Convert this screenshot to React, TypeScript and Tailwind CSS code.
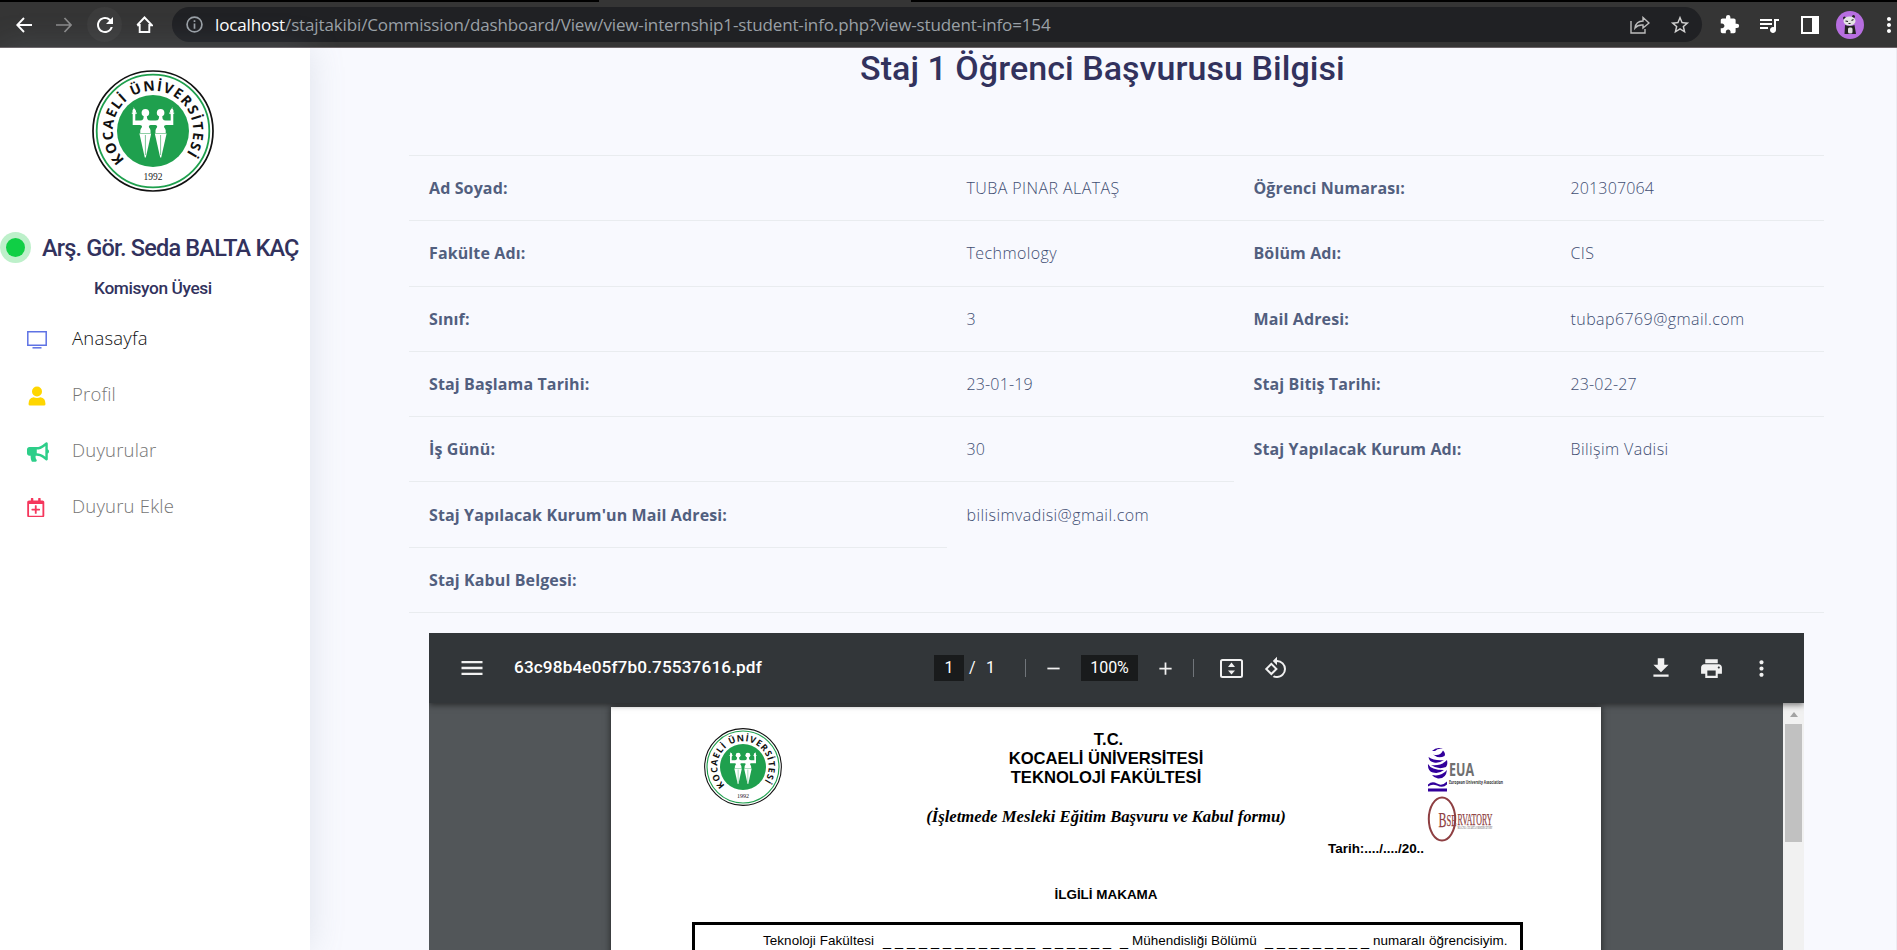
import {
  MdAdd, MdExtension, MdFileDownload, MdMenu, MdMoreVert, MdPrint, MdQueueMusic,
  MdRefresh, MdRemove, MdRotate90DegreesCcw, MdStarBorder,
} from 'react-icons/md';
import { FaBullhorn, FaRegCalendarPlus } from 'react-icons/fa';

function UniversityLogo({ id, className }: { id: string; className: string }) {
  return (
    <svg viewBox="-61 -61 122 122" className={className}>
      <circle r="60" fill="#fff" stroke="#111" strokeWidth="1.7" />
      <circle r="56.3" fill="none" stroke="#1fa04e" strokeWidth="1.8" />
      <circle r="36" fill="#1fa04e" />
      <path id={id} d="M-28.300 28.700A40.300 40.300 0 1 1 28.300 28.700" fill="none" />
      <text fontFamily="Open Sans, sans-serif" fontWeight="700" fontSize="14" fill="#111">
        <textPath href={`#${id}`} textLength="182" lengthAdjust="spacing">KOCAELİ ÜNİVERSİTESİ</textPath>
      </text>
      <text y="49" textAnchor="middle" fontFamily="Liberation Serif, serif" fontSize="9.5" fill="#222">1992</text>
      <g fill="#fff">
        {[1, -1].map((s) => (
          <g key={s} transform={`scale(${s} 1)`}>
            <circle cx="7.6" cy="-18.300" r="3.800" />
            <path d="M6.300-15.500h2.800l.600 3.500q1 1.500 3 1.500h5v-7.500h2.600v12h-7.300q-2 0-2 1.500.200 1.200 1.200 2.200.800 1.200.500 4.300H2.500q-.300-3 .500-4.300 1-1 1.200-2.200Q4-6 2.500-6H0v-4.500h2.500q2.500 0 3.200-1.500z" />
            <path d="M1.800 2.500h11.800L8.200 26.500H7.200z" />
            <path d="M18.800-23.500q2.800 3.500 1.200 5h1.200v1.200h-1.500l-.5 2h-1l-.5-2h-1.500v-1.200h1.200q-1.700-1.700 2.400-5z" />
          </g>
        ))}
      </g>
      <path d="M-7.600 4v20M7.600 4v20" stroke="#1fa04e" strokeWidth=".6" />
    </svg>
  );
}

function Bar() {
  return (
    <header className="flex h-12 shrink-0 flex-col bg-[#353535]">
      <div className="flex h-0.5 bg-black">
        <div className="ml-[599px] w-[312px] bg-[#353535]" />
      </div>
      <div className="flex h-[45px] items-center">
        <svg viewBox="0 0 16 16" className="ml-4 size-4 shrink-0 fill-none stroke-white stroke-[1.9]"><path d="M16 8H1.500M8 1 1.300 8 8 15" /></svg>
        <svg viewBox="0 0 16 16" className="ml-6 size-4 shrink-0 fill-none stroke-[#8a8a8a] stroke-[1.700]"><path d="M0 8h15M8.500 1 15 8 8.500 15" /></svg>
        <span className="ml-[15px] flex size-[35px] shrink-0 items-center justify-center rounded-full bg-[#3c3c3c]">
          <MdRefresh className="size-6 text-white" />
        </span>
        <svg viewBox="0 0 16 17" className="ml-[14px] size-[17px] shrink-0 fill-none stroke-white stroke-[1.900]"><path d="M3.200 8v8h9.600V8M.700 9.200 8 1.500l7.300 7.700H13M3 9.200H.700" /></svg>
        <div className="ml-[19px] flex h-[35px] w-[1530px] shrink-0 items-center rounded-full bg-[#202124]">
          <svg viewBox="0 0 16 16" className="ml-3.5 size-[17px] fill-none stroke-[#9aa0a6] stroke-[1.600]"><circle cx="8" cy="8" r="7" /><path d="M8 7v5M8 4v1.700" /></svg>
          <p className="ml-3 w-[1180px] whitespace-nowrap font-['Open_Sans'] text-[17px] leading-6 tracking-[-0.130px] text-[#9aa0a6]">
            <span className="text-white">localhost</span>/stajtakibi/Commission/dashboard/View/view-internship1-student-info.php?view-student-info=154
          </p>
          <svg viewBox="0 0 20 18" className="ml-auto h-[18px] w-5 fill-none stroke-[#bdbdbd] stroke-[1.400]"><path d="M1 5v12h14v-4M5 12q1-7 8-7V1.500L19 7l-6 5V9q-5-.500-8 3z" /></svg>
          <MdStarBorder className="ml-[19px] mr-[11px] size-[22px] text-[#d0d0d0]" />
        </div>
        <MdExtension className="ml-[17px] size-[21px] shrink-0 text-white" />
        <MdQueueMusic className="ml-[17px] size-6 shrink-0 text-white" />
        <span className="ml-[20px] h-[18px] w-[18px] shrink-0 border-2 border-r-[7px] border-white" />
        <svg viewBox="-14 -14 28 28" className="ml-[17px] size-7 shrink-0">
          <circle r="14" fill="#b76ee0" />
          <circle cx="-5.500" cy="-7" r="1.500" fill="#222" /><circle cx="3.500" cy="-8.500" r="1.500" fill="#222" />
          <ellipse cx="-.5" cy="-4" rx="6" ry="4.500" fill="#e4e4e4" />
          <path d="M-4.500-4l2.500.5M3.500-5.500l-2 1M-1.500-1.500h2" stroke="#222" strokeWidth="1.100" />
          <path d="M-5 0q5 2 9.500 0l1.500 9h-11.500z" fill="#222" />
          <rect x="-2" y="2.500" width="4.500" height="6" rx="1.500" fill="#ddd" />
        </svg>
        <MdMoreVert className="ml-[13px] size-6 shrink-0 text-white" />
      </div>
      <div className="h-px bg-[#6b6467]" />
    </header>
  );
}

const menu = [
  { label: 'Anasayfa', tone: 'text-[#111]', icon: <svg viewBox="0 0 20 18" className="h-[18px] w-5 fill-none stroke-[#5e72e4]"><path strokeWidth="1.500" d="M.800.800h18.400v13.400H.800z" /><path strokeWidth="1.500" d="M5.500 16.800h9" /></svg> },
  { label: 'Profil', tone: 'text-[#757575]', icon: <svg viewBox="0 0 18 20" className="ml-[1.500px] h-5 w-[18px] fill-[#ffd600]"><circle cx="9" cy="5.500" r="5" /><path d="M.500 18q0-6 5-6.800 3.500 1.500 7 0 5 .800 5 6.800 0 1.500-1.500 1.500H2Q.500 19.500.500 18z" /></svg> },
  { label: 'Duyurular', tone: 'text-[#757575]', icon: <FaBullhorn className="-mt-px ml-[0.500px] h-5 w-[22px] text-[#2dce89]" /> },
  { label: 'Duyuru Ekle', tone: 'text-[#757575]', icon: <FaRegCalendarPlus className="-mt-px -ml-px size-[19.500px] text-[#f5365c]" /> },
];

function Sidebar() {
  return (
    <aside className="z-10 flex w-[310px] shrink-0 flex-col bg-white pt-[22px] shadow-[0_0_32px_rgba(136,152,170,0.22)]">
      <UniversityLogo id="side-ring" className="ml-[92px] size-[122px]" />
      <div className="mt-[36px] flex h-[38px] items-center">
        <span className="flex size-[31px] shrink-0 items-center justify-center rounded-full bg-[#bdf0ca]">
          <span className="size-[19px] rounded-full bg-[#10cf45]" />
        </span>
        <h2 className="ml-[11px] mt-1 whitespace-nowrap font-['Roboto'] text-[23.500px] font-medium tracking-[-0.800px] text-[#32325d]">Arş. Gör. Seda BALTA KAÇ</h2>
      </div>
      <p className="mt-[8px] h-[27px] w-[306px] text-center font-['Roboto'] text-[17.300px] font-medium leading-7 tracking-[-0.380px] text-[#32325d]">Komisyon Üyesi</p>
      <nav className="mt-[9px] flex flex-col">
        {menu.map((m) => (
          <a key={m.label} className="flex h-14 items-center">
            <span className="ml-[26.500px] mt-1 flex w-[45.500px] shrink-0">{m.icon}</span>
            <span className={`font-['Open_Sans'] text-[18.500px] font-light tracking-[0.200px] ${m.tone}`}>{m.label}</span>
          </a>
        ))}
      </nav>
    </aside>
  );
}

const rows = [
  ['Ad Soyad:', 'TUBA PINAR ALATAŞ', 'Öğrenci Numarası:', '201307064'],
  ['Fakülte Adı:', 'Techmology', 'Bölüm Adı:', 'CIS'],
  ['Sınıf:', '3', 'Mail Adresi:', 'tubap6769@gmail.com'],
  ['Staj Başlama Tarihi:', '23-01-19', 'Staj Bitiş Tarihi:', '23-02-27'],
  ['İş Günü:', '30', 'Staj Yapılacak Kurum Adı:', 'Bilişim Vadisi'],
  ["Staj Yapılacak Kurum'un Mail Adresi:", 'bilisimvadisi@gmail.com'],
  ['Staj Kabul Belgesi:'],
];

function cellTone(cell: string, index: number) {
  if (index % 2 === 0) return 'font-bold tracking-[0.120px] text-[#525f7f]';
  if (/^[\d-]+$/.test(cell)) return 'font-light tracking-[0.150px] text-[#414e72]';
  return 'font-light tracking-[0.420px] text-[#414e72]';
}

function InfoTable() {
  return (
    <div className="flex w-[1415px] shrink-0 flex-col border-b border-[#e9ecef] font-['Open_Sans'] text-[16px]">
      {rows.map((cells) => (
        <div key={cells[0]} className="grid h-[65.300px] grid-cols-[537.500px_287px_317px_273.500px]">
          {cells.map((cell, i) => (
            <div key={i} className={`flex items-center border-t border-[#e9ecef] pl-5 ${cellTone(cell, i)}`}>
              {cell}
            </div>
          ))}
        </div>
      ))}
    </div>
  );
}

function EuaMark() {
  return (
    <svg viewBox="0 0 90 100" className="absolute left-[816px] top-[39px] h-[100px] w-[90px]">
      <g fill="#32009b">
        <path d="M5 5q5-5 11-2-5-1-8 2zM6 8.500q7 2 10-4 3 3 1.500 5.500-6 3-11.500-1.500zM1.500 11q6 4 15.500 3-5 3.500-10 2.500-5-1-5.500-5.500z" />
        <path d="M4 19q10 1.500 16-5 1 5-1 7-8 3-15-2zM1 18q3 6 16 6-5 4-11 2.500Q.500 25 1 18zM5 29q9 2 15-5-1 9-9 8.500-4-.500-6-3.500zM1 42.500h19v3H1zM1 38.500q4-4 9-1 5 3 10-2v3q-4 4-10 1-5-2-9 1z" />
      </g>
      <text x="22" y="30" textLength="25" lengthAdjust="spacingAndGlyphs" fontFamily="Open Sans, sans-serif" fontWeight="700" fontSize="17" fill="#707070">EUA</text>
      <text x="22" y="37.500" textLength="54" lengthAdjust="spacingAndGlyphs" fontFamily="Open Sans, sans-serif" fontWeight="700" fontSize="5.500" fill="#333">European University Association</text>
      <ellipse cx="15" cy="73" rx="13.200" ry="21.500" fill="none" stroke="#8e3f42" strokeWidth="2" />
      <g fontFamily="Liberation Serif, serif" fill="#8e3f42" stroke="#8e3f42" strokeWidth=".25">
        <text x="11.500" y="80.500" textLength="8" lengthAdjust="spacingAndGlyphs" fontSize="22">B</text>
        <text x="19.500" y="79.500" textLength="10" lengthAdjust="spacingAndGlyphs" fontSize="17">SE</text>
        <text x="30.500" y="79" textLength="35" lengthAdjust="spacingAndGlyphs" fontSize="16">RVATORY</text>
        <text x="30.500" y="83" textLength="35" lengthAdjust="spacingAndGlyphs" fontSize="4" fill="#555" stroke="none">MAGNA CHARTA OBSERVATORY</text>
      </g>
    </svg>
  );
}

function PdfViewer() {
  return (
    <div className="ml-5 mt-5 flex h-[400px] w-[1375px] shrink-0 flex-col overflow-hidden">
      <div className="relative z-10 flex h-[70px] shrink-0 items-center bg-[#323639] font-['Roboto'] text-[16px] text-white shadow-[0_2px_6px_rgba(0,0,0,0.500)]">
        <MdMenu className="ml-[28.500px] h-[28px] w-[28px] text-[#f1f1f1]" />
        <span className="ml-[28.500px] w-[420px] whitespace-nowrap text-[17.200px] font-medium tracking-[0.120px]">63c98b4e05f7b0.75537616.pdf</span>
        <span className="flex h-[26px] w-[30px] items-center justify-center bg-[#191b1c]">1</span>
        <span className="ml-[5px] w-[17px]">/</span>
        <span className="w-[39px]">1</span>
        <span className="h-[18px] w-px bg-[#70757a]" />
        <MdRemove className="ml-[17px] size-[21px] text-[#f1f1f1]" />
        <span className="ml-[17px] flex h-[26px] w-[57px] items-center justify-center bg-[#191b1c]">100%</span>
        <MdAdd className="ml-[17px] size-[21px] text-[#f1f1f1]" />
        <span className="ml-[17px] h-[18px] w-px bg-[#70757a]" />
        <svg viewBox="0 0 23 19" className="ml-[26px] h-[19px] w-[23px]">
          <rect x="1" y="1" width="21" height="17" rx="1.500" fill="none" stroke="#f1f1f1" strokeWidth="2" />
          <path d="M11.500 3.500 15 8H8zM11.500 15.500 15 11.500H8z" fill="#f1f1f1" />
        </svg>
        <MdRotate90DegreesCcw className="ml-[21px] size-6 text-[#f1f1f1]" />
        <MdFileDownload className="ml-[360px] size-[26px] text-[#f1f1f1]" />
        <MdPrint className="ml-[25px] size-[25px] text-[#f1f1f1]" />
        <MdMoreVert className="ml-[25px] size-[25px] text-[#f1f1f1]" />
      </div>
      <div className="flex flex-1 bg-[#525659]">
        <article className="relative ml-[182px] mt-1 flex w-[990px] flex-col bg-white font-['Liberation_Sans'] text-black shadow-[0_0_7px_rgba(0,0,0,0.600)]">
          <UniversityLogo id="doc-ring" className="absolute left-[93px] top-[21px] size-[78px]" />
          <EuaMark />
          <div className="mt-[23px] shrink-0 text-center text-[16.600px] font-bold leading-[19px]">
            <p className="pl-[5px]">T.C.</p>
            <p>KOCAELİ ÜNİVERSİTESİ</p>
            <p>TEKNOLOJİ FAKÜLTESİ</p>
          </div>
          <p className="mt-[20px] text-center font-['Liberation_Serif'] text-[16.700px] font-bold italic leading-5">(İşletmede Mesleki Eğitim Başvuru ve Kabul formu)</p>
          <p className="ml-[717px] mt-[12px] text-[13.450px] font-bold leading-5">Tarih:..../..../20..</p>
          <p className="mt-[26px] text-center text-[13.450px] font-bold leading-5">İLGİLİ MAKAMA</p>
          <div className="ml-[81px] mt-[17px] flex h-[200px] w-[831px] shrink-0 whitespace-nowrap border-[3px] border-b-0 border-black pt-[6px] text-[13.450px] leading-5">
            <span className="ml-[68px] w-[120px] tracking-[0.070px]">Teknoloji Fakültesi</span>
            <span className="w-[160px] text-[14.400px]">_ _ _ _ _ _ _ _ _ _ _ _ _</span>
            <span className="w-[77px] text-[14.400px]">_ _ _ _ _ _</span>
            <span className="w-[12px] text-[14.400px]">_</span>
            <span className="w-[133px] tracking-[0.040px]">Mühendisliği Bölümü</span>
            <span className="w-[108px] text-[14.400px]">_ _ _ _ _ _ _ _ _</span>
            <span>numaralı öğrencisiyim.</span>
          </div>
        </article>
        <div className="ml-auto flex w-[21px] flex-col items-center bg-[#f1f1f1] pt-[9px]">
          <svg viewBox="0 0 8 5" className="h-[5px] w-2 fill-[#a3a3a3]"><path d="M0 5l4-5 4 5z" /></svg>
          <div className="mt-[7px] h-[118px] w-[17px] bg-[#c1c1c1]" />
        </div>
      </div>
    </div>
  );
}

export default function App() {
  return (
    <div className="flex h-[950px] w-[1897px] flex-col overflow-hidden bg-[#f8f9fe]">
      <Bar />
      <div className="flex min-h-0 flex-1">
        <Sidebar />
        <main className="flex flex-1 flex-col border-r border-[#ececf2] pl-[99px]">
          <h1 className="ml-[451px] h-[107px] shrink-0 whitespace-nowrap font-['Roboto'] text-[34px] font-medium leading-[40px] tracking-[0.050px] text-[#32325d]">Staj 1 Öğrenci Başvurusu Bilgisi</h1>
          <InfoTable />
          <PdfViewer />
        </main>
      </div>
    </div>
  );
}
